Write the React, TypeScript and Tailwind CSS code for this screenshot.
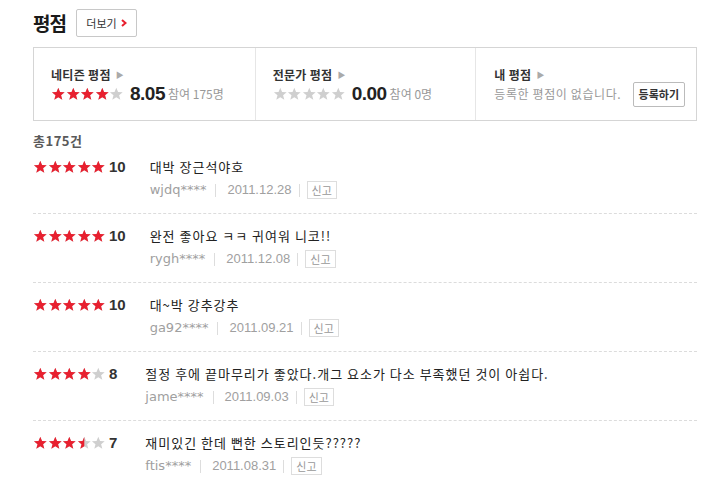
import React from "react";

type Review = {
  stars: number;
  score: number;
  text: string;
  user: string;
  date: string;
};

const REVIEWS: Review[] = [
  { stars: 5, score: 10, text: "대박 장근석야호", user: "wjdq****", date: "2011.12.28" },
  { stars: 5, score: 10, text: "완전 좋아요 ㅋㅋ 귀여워 니코!!", user: "rygh****", date: "2011.12.08" },
  { stars: 5, score: 10, text: "대~박 강추강추", user: "ga92****", date: "2011.09.21" },
  {
    stars: 4,
    score: 8,
    text: "절정 후에 끝마무리가 좋았다.개그 요소가 다소 부족했던 것이 아쉽다.",
    user: "jame****",
    date: "2011.09.03",
  },
  { stars: 3.5, score: 7, text: "재미있긴 한데 뻔한 스토리인듯?????", user: "ftis****", date: "2011.08.31" },
];

const STAR = "M7 0.8 L8.75 5.1 L13.4 5.3 L9.8 8.25 L11 12.8 L7 10.2 L3 12.8 L4.2 8.25 L0.6 5.3 L5.25 5.1 Z";

function Star({ fill }: { fill: number }) {
  // fill: 1 full, 0.5 half, 0 empty
  const id = React.useId();
  return (
    <svg width="14.6" height="14" viewBox="0 0 14 14" className="shrink-0">
      <defs>
        <clipPath id={id}>
          <rect x="0" y="0" width={14 * fill} height="14" />
        </clipPath>
      </defs>
      <path d={STAR} fill="#cfcfcf" />
      {fill > 0 && <path d={STAR} fill="#e8202f" clipPath={`url(#${id})`} />}
    </svg>
  );
}

function Stars({ value }: { value: number }) {
  return (
    <div className="flex items-center">
      {[0, 1, 2, 3, 4].map((i) => (
        <Star key={i} fill={Math.max(0, Math.min(1, value - i))} />
      ))}
    </div>
  );
}

function Arrow() {
  return <span className="ml-[5px] text-[8px] text-[#aaa] leading-none">▶</span>;
}

function ReviewRow({ r, first, last }: { r: Review; first?: boolean; last?: boolean }) {
  return (
    <div
      className={
        "flex pb-[13px] " +
        (first ? "pt-[6px] " : "pt-[12px] ") +
        (last ? "" : "border-b border-dashed border-[#dcdcdc]")
      }
    >
      <div className="flex h-5 items-center shrink-0">
        <Stars value={r.stars} />
        <span className="ml-[3px] font-['Liberation_Sans',sans-serif] text-[15px] font-bold text-[#333]">
          {r.score}
        </span>
      </div>
      <div className={"flex flex-col " + (r.score >= 10 ? "ml-[24px]" : "ml-[28px]")}>
        <div className="h-5 leading-5 text-[13px] tracking-[1px] text-[#222]">{r.text}</div>
        <div className="mt-[3px] flex h-5 items-center text-[13px] text-[#a0a0a0]">
          <span className="font-['DejaVu_Sans',sans-serif]">{r.user}</span>
          <span className="ml-[9px] mr-[11px] h-[13px] w-px bg-[#ddd]" />
          <span className="font-['Liberation_Sans',sans-serif]">{r.date}</span>
          <span className="mx-[7px] h-[13px] w-px bg-[#ddd]" />
          <span className="border border-[#ddd] px-[4px] text-[11px] leading-[16px] text-[#999]">
            신고
          </span>
        </div>
      </div>
    </div>
  );
}

export default function App() {
  return (
    <div className="min-h-[477px] w-[719px] bg-white pl-[33px] pr-[22px] font-['Noto_Sans_CJK_KR',sans-serif] text-[#333]">
      {/* header */}
      <div className="flex items-center pt-[9px]">
        <h2 className="text-[19px] font-bold leading-[28px] tracking-[-1px] text-[#1a1a1a]">평점</h2>
        <button className="ml-[10px] flex h-[28px] w-[61px] items-center justify-center rounded-[2px] border border-[#c8c8c8] bg-white text-[11px] text-[#333]">
          더보기
          <svg width="6" height="8" viewBox="0 0 6 8" className="ml-[4px]">
            <path d="M1 1 L4.5 4 L1 7" fill="none" stroke="#e8202f" strokeWidth="2" />
          </svg>
        </button>
      </div>

      {/* summary */}
      <div className="mt-[10px] grid h-[74px] grid-cols-3 border border-[#d5d5d5]">
        <div className="pl-[17px] pt-[19px]">
          <div className="flex h-4 items-center text-[12px] font-bold tracking-[0.3px] text-[#333]">
            네티즌 평점
            <Arrow />
          </div>
          <div className="mt-[1px] flex h-5 items-center">
            <Stars value={4} />
            <span className="ml-[6px] font-['Liberation_Sans',sans-serif] text-[19px] font-bold tracking-[-0.5px] text-[#222]">
              8.05
            </span>
            <span className="ml-[3px] text-[12px] text-[#999]">참여 175명</span>
          </div>
        </div>
        <div className="border-l border-[#e6e6e6] pl-[17px] pt-[19px]">
          <div className="flex h-4 items-center text-[12px] font-bold tracking-[0.3px] text-[#333]">
            전문가 평점
            <Arrow />
          </div>
          <div className="mt-[1px] flex h-5 items-center">
            <Stars value={0} />
            <span className="ml-[6px] font-['Liberation_Sans',sans-serif] text-[19px] font-bold tracking-[-0.5px] text-[#222]">
              0.00
            </span>
            <span className="ml-[3px] text-[12px] text-[#999]">참여 0명</span>
          </div>
        </div>
        <div className="border-l border-[#e6e6e6] pl-[18px] pr-[11px] pt-[19px]">
          <div className="flex h-4 items-center text-[12px] font-bold tracking-[0.3px] text-[#333]">
            내 평점
            <Arrow />
          </div>
          <div className="mt-[1px] flex h-5 items-center justify-between">
            <span className="text-[12px] tracking-[0.6px] text-[#999]">등록한 평점이 없습니다.</span>
            <button className="h-[25px] rounded-[2px] border border-[#bbb] bg-white px-[5px] text-[11px] font-bold text-[#333]">
              등록하기
            </button>
          </div>
        </div>
      </div>

      {/* list */}
      <div className="mt-[10px] text-[13px] font-bold leading-[20px] tracking-[0.5px] text-[#5a5a5a]">총175건</div>
      <div>
        {REVIEWS.map((r, i) => (
          <ReviewRow key={i} r={r} first={i === 0} last={i === REVIEWS.length - 1} />
        ))}
      </div>
    </div>
  );
}
